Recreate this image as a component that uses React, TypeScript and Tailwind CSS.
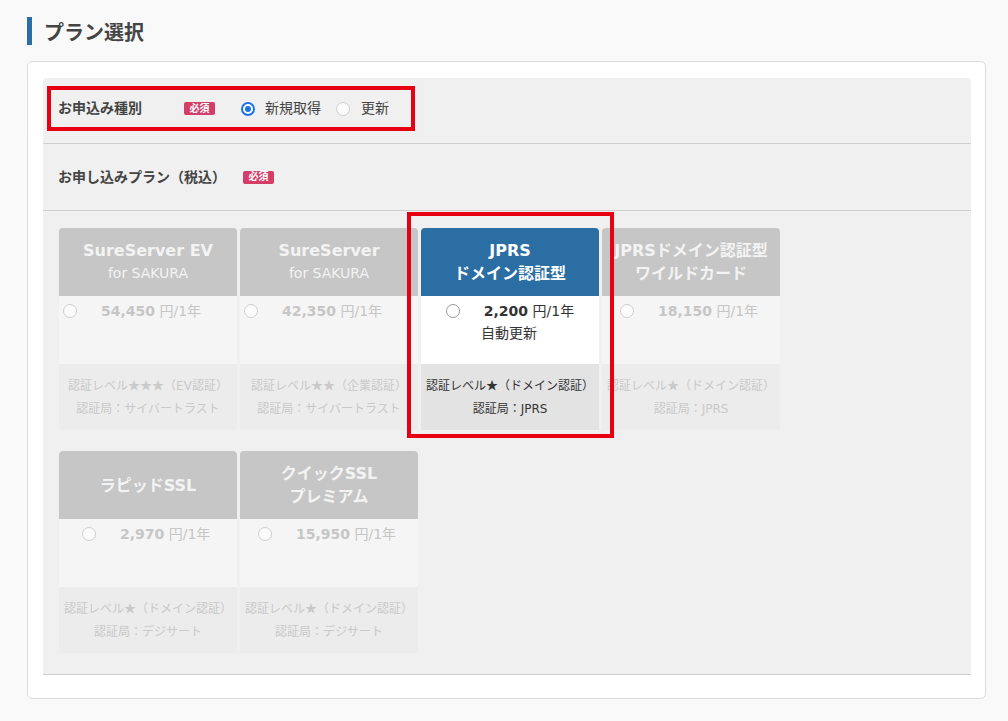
import React from "react";

type Card = {
  title: string[];
  subNormal?: boolean;
  price: string;
  extra?: string;
  level: string;
  ca: string;
  offset?: number;
  active?: boolean;
};

const cards: Card[] = [
  { title: ["SureServer EV", "for SAKURA"], subNormal: true, price: "54,450", level: "認証レベル★★★（EV認証）", ca: "認証局：サイバートラスト", offset: 4 },
  { title: ["SureServer", "for SAKURA"], subNormal: true, price: "42,350", level: "認証レベル★★（企業認証）", ca: "認証局：サイバートラスト", offset: 4 },
  { title: ["JPRS", "ドメイン認証型"], price: "2,200", extra: "自動更新", level: "認証レベル★（ドメイン認証）", ca: "認証局：JPRS", active: true },
  { title: ["JPRSドメイン認証型", "ワイルドカード"], price: "18,150", level: "認証レベル★（ドメイン認証）", ca: "認証局：JPRS", offset: 18 },
  { title: ["ラピッドSSL"], price: "2,970", level: "認証レベル★（ドメイン認証）", ca: "認証局：デジサート", offset: 23 },
  { title: ["クイックSSL", "プレミアム"], price: "15,950", level: "認証レベル★（ドメイン認証）", ca: "認証局：デジサート", offset: 18 },
];

const font = { fontFamily: '"DejaVu Sans", "Noto Sans CJK JP", sans-serif' };
const cjk = { fontFamily: '"Noto Sans CJK JP", sans-serif' };

function Radio({ checked, dim }: { checked?: boolean; dim?: boolean }) {
  if (checked) {
    return (
      <span className="flex h-[14px] w-[14px] shrink-0 items-center justify-center rounded-full border-[2px] border-[#1a73e8] bg-white">
        <span className="h-[6px] w-[6px] rounded-full bg-[#1a73e8]" />
      </span>
    );
  }
  return (
    <span
      className={
        "block h-[14px] w-[14px] shrink-0 rounded-full border " +
        (dim ? "border-[#cfcfcf] bg-[#fbfbfb]" : "border-[#9a9a9a] bg-white")
      }
    />
  );
}

function Badge() {
  return (
    <span className="inline-flex h-[13px] w-[31px] items-center justify-center rounded-[2px] bg-[#d43d68] text-[10px] font-bold leading-none text-white">
      必須
    </span>
  );
}

function Level({ text }: { text: string }) {
  const m = text.match(/^(.*?)(★+)(.*)$/);
  if (!m) return <>{text}</>;
  return (
    <>
      {m[1]}
      <span style={cjk}>{m[2]}</span>
      {m[3]}
    </>
  );
}

function PlanCard({ c }: { c: Card }) {
  const active = !!c.active;
  return (
    <div className="relative w-[178px]">
      {active && (
        <div className="pointer-events-none absolute left-[-14px] top-[-16px] z-10 h-[226px] w-[207px] border-4 border-[#e60012]" />
      )}
      <div
        className={
          "flex h-[68px] flex-col items-center justify-center whitespace-nowrap rounded-t-[4px] text-center text-[16px] font-bold leading-[23px] " +
          (active ? "bg-[#2b6ea3] text-white" : "bg-[#c6c6c6] text-[#f3f3f3]")
        }
      >
        {c.title.map((t, i) => (
          <div
            key={i}
            className={i === 1 && c.subNormal ? "text-[14px] font-normal" : ""}
          >
            {t}
          </div>
        ))}
      </div>
      <div
        className={
          "h-[68px] pt-[4px] text-[14px] leading-[22px] " +
          (active ? "bg-white text-[#333]" : "bg-[#f5f5f5] text-[#c6c6c6]")
        }
      >
        {active ? (
          <div className="text-center">
            <div className="flex items-center justify-center">
              <Radio />
              <span className="ml-[24px]">
                <b>{c.price}</b> 円/1年
              </span>
            </div>
            <div className="ml-[-2px]">{c.extra}</div>
          </div>
        ) : (
          <div className="flex items-center" style={{ paddingLeft: c.offset }}>
            <Radio dim />
            <span className="ml-[24px] whitespace-nowrap">
              <b>{c.price}</b> 円/1年
            </span>
          </div>
        )}
      </div>
      <div
        className={
          "flex h-[66px] flex-col items-center justify-center whitespace-nowrap text-center text-[12px] leading-[23px] " +
          (active ? "bg-[#e3e3e3] text-[#333]" : "bg-[#ececec] text-[#c9c9c9]")
        }
      >
        <div>
          <Level text={c.level} />
        </div>
        <div>{c.ca}</div>
      </div>
    </div>
  );
}

export default function App() {
  return (
    <div className="min-h-screen bg-[#f9f9f9] pl-[27px] pt-[17px] text-[#444]" style={font}>
      <div className="flex h-[28px] items-center">
        <div className="h-[28px] w-[5px] bg-[#2b6ea3]" />
        <h1 className="ml-[12px] mt-[3px] text-[20px] font-bold leading-none text-[#444]">プラン選択</h1>
      </div>
      <div className="mt-[16px] h-[638px] w-[959px] rounded-[5px] border border-[#dcdcdc] bg-white pl-[15px] pt-[16px]">
        <div className="w-[928px] rounded-t-[4px] border-b border-[#cccccc] bg-[#f0f0f0]">
          <div className="h-[66px] border-b border-[#cfcfcf] pl-[4px] pt-[8px]">
            <div className="flex h-[45px] w-[368px] items-center border-4 border-[#e60012] pl-[7px]">
              <span className="w-[126px] text-[14px] font-bold">お申込み種別</span>
              <Badge />
              <span className="ml-[26px] flex items-center">
                <Radio checked />
                <span className="ml-[10px] text-[14px] text-[#444]">新規取得</span>
              </span>
              <span className="ml-[15px] flex items-center">
                <Radio dim />
                <span className="ml-[11px] text-[14px] text-[#444]">更新</span>
              </span>
            </div>
          </div>
          <div className="flex h-[67px] items-center border-b border-[#cfcfcf] pl-[15px]">
            <span className="w-[185px] text-[14px] font-bold">お申し込みプラン（税込）</span>
            <Badge />
          </div>
          <div className="pb-[21px] pl-[16px] pt-[17px]">
            <div className="grid grid-cols-[repeat(4,178px)] gap-x-[3px] gap-y-[21px]">
              {cards.map((c, i) => (
                <PlanCard key={i} c={c} />
              ))}
            </div>
          </div>
        </div>
      </div>
    </div>
  );
}
